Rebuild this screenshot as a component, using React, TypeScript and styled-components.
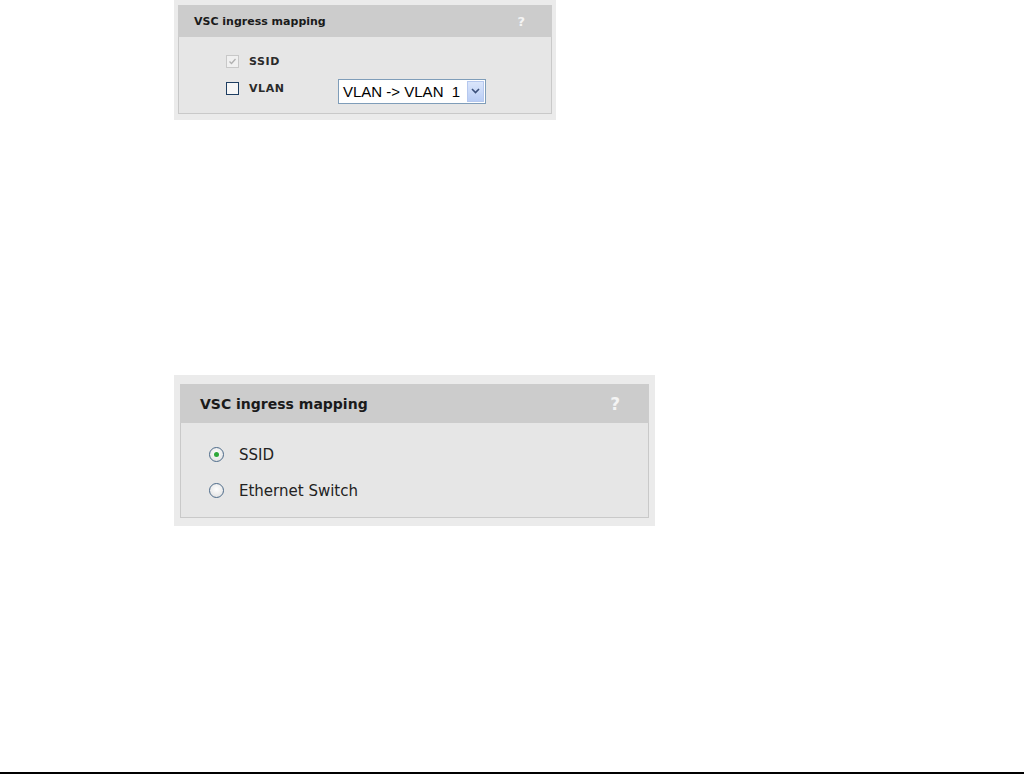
import styled, { createGlobalStyle } from "styled-components"

const GlobalStyle = createGlobalStyle`
  html, body {
    margin: 0;
    padding: 0;
    background: #fff;
  }
  body {
    font-family: "DejaVu Sans", Verdana, sans-serif;
  }
`

const Page = styled.div`
  position: relative;
  width: 1024px;
  height: 774px;
  display: flex;
  flex-direction: column;
  padding-left: 174px;
  box-sizing: border-box;
`

const Frame = styled.div<{ $w: number; $pad: string; $top: number }>`
  width: ${p => p.$w}px;
  margin-top: ${p => p.$top}px;
  background: #ebebeb;
  padding: ${p => p.$pad};
  box-sizing: border-box;
`

const Header = styled.div<{ $h: number; $size: number; $padL: number; $padR: number }>`
  height: ${p => p.$h}px;
  background: #cccccc;
  display: flex;
  align-items: center;
  justify-content: space-between;
  padding: 0 ${p => p.$padR}px 0 ${p => p.$padL}px;
  font-size: ${p => p.$size}px;
  font-weight: bold;
  color: #1a1a1a;
`

const Help = styled.span<{ $size: number }>`
  color: #f4f4f4;
  font-weight: bold;
  font-size: ${p => p.$size}px;
`

const Body = styled.div<{ $h: number }>`
  height: ${p => p.$h}px;
  background: #e6e6e6;
  border: 1px solid #c9c9c9;
  border-top: none;
  box-sizing: border-box;
`

const CheckRows = styled.div`
  display: flex;
  flex-direction: column;
  gap: 13px;
  padding: 17px 0 0 47px;
`

const Row = styled.div<{ $h?: number }>`
  display: flex;
  align-items: center;
  height: ${p => p.$h ?? 14}px;
`

const Box = styled.span<{ $disabled?: boolean }>`
  width: 11px;
  height: 11px;
  border: 1px solid ${p => (p.$disabled ? "#c8c8c8" : "#1e3e62")};
  background: ${p => (p.$disabled ? "#f0f0f0" : "#f6f6f6")};
  display: inline-flex;
  align-items: center;
  justify-content: center;
`

const SmallLabel = styled.span<{ $w: number }>`
  width: ${p => p.$w}px;
  margin-left: 10px;
  font-size: 11px;
  font-weight: bold;
  letter-spacing: 0.6px;
  color: #2a2a2a;
`

const Select = styled.div`
  display: flex;
  align-items: center;
  width: 148px;
  height: 25px;
  box-sizing: border-box;
  border: 1px solid #7f9db9;
  background: #fff;
  font-family: "Liberation Sans", Arial, sans-serif;
  font-size: 15px;
  color: #000;
  padding: 1px 1px 1px 4px;
  margin-top: 6px;
`

const SelectText = styled.span`
  flex: 1;
  white-space: pre;
`

const Arrow = styled.span`
  width: 17px;
  height: 21px;
  background: linear-gradient(#dbe6fb, #b9cdf5);
  border: 1px solid #b6c8ee;
  box-sizing: border-box;
  display: flex;
  align-items: center;
  justify-content: center;
`

const RadioRows = styled.div`
  display: flex;
  flex-direction: column;
  gap: 21px;
  padding: 24px 0 0 28px;
`

const Radio = styled.span<{ $on?: boolean }>`
  width: 15px;
  height: 15px;
  border-radius: 50%;
  border: 1.5px solid #4d6b8a;
  background: radial-gradient(circle at 50% 40%, #ffffff, #dcdcdc);
  box-sizing: border-box;
  display: flex;
  align-items: center;
  justify-content: center;
  &::after {
    content: "";
    display: ${p => (p.$on ? "block" : "none")};
    width: 5px;
    height: 5px;
    border-radius: 50%;
    background: #2fa83a;
  }
`

const RadioLabel = styled.span`
  margin-left: 15px;
  font-size: 15px;
  color: #222;
`

const BottomRule = styled.div`
  position: absolute;
  left: 0;
  right: 0;
  bottom: 0;
  height: 2px;
  background: #000;
`

export default function App() {
  return (
    <>
      <GlobalStyle />
      <Page>
        <Frame $w={382} $pad="5px 4px 6px" $top={0}>
          <Header $h={32} $size={11} $padL={16} $padR={27}>
            <span>VSC ingress mapping</span>
            <Help $size={13}>?</Help>
          </Header>
          <Body $h={77}>
            <CheckRows>
              <Row>
                <Box $disabled>
                  <svg width="9" height="9" viewBox="0 0 9 9">
                    <path d="M1.5 4.5 L3.5 6.5 L7.5 2" fill="none" stroke="#b0b0b0" strokeWidth="1.3" />
                  </svg>
                </Box>
                <SmallLabel $w={89}>SSID</SmallLabel>
              </Row>
              <Row>
                <Box />
                <SmallLabel $w={89}>VLAN</SmallLabel>
                <Select>
                  <SelectText>VLAN -&gt; VLAN  1</SelectText>
                  <Arrow>
                    <svg width="9" height="6" viewBox="0 0 9 6">
                      <path d="M1 1 L4.5 4.5 L8 1" fill="none" stroke="#3a4f7a" strokeWidth="1.6" />
                    </svg>
                  </Arrow>
                </Select>
              </Row>
            </CheckRows>
          </Body>
        </Frame>

        <Frame $w={481} $pad="9px 6px 8px" $top={255}>
          <Header $h={39} $size={14} $padL={20} $padR={29}>
            <span>VSC ingress mapping</span>
            <Help $size={17}>?</Help>
          </Header>
          <Body $h={95}>
            <RadioRows>
              <Row $h={15}>
                <Radio $on />
                <RadioLabel>SSID</RadioLabel>
              </Row>
              <Row $h={15}>
                <Radio />
                <RadioLabel>Ethernet Switch</RadioLabel>
              </Row>
            </RadioRows>
          </Body>
        </Frame>
        <BottomRule />
      </Page>
    </>
  )
}
